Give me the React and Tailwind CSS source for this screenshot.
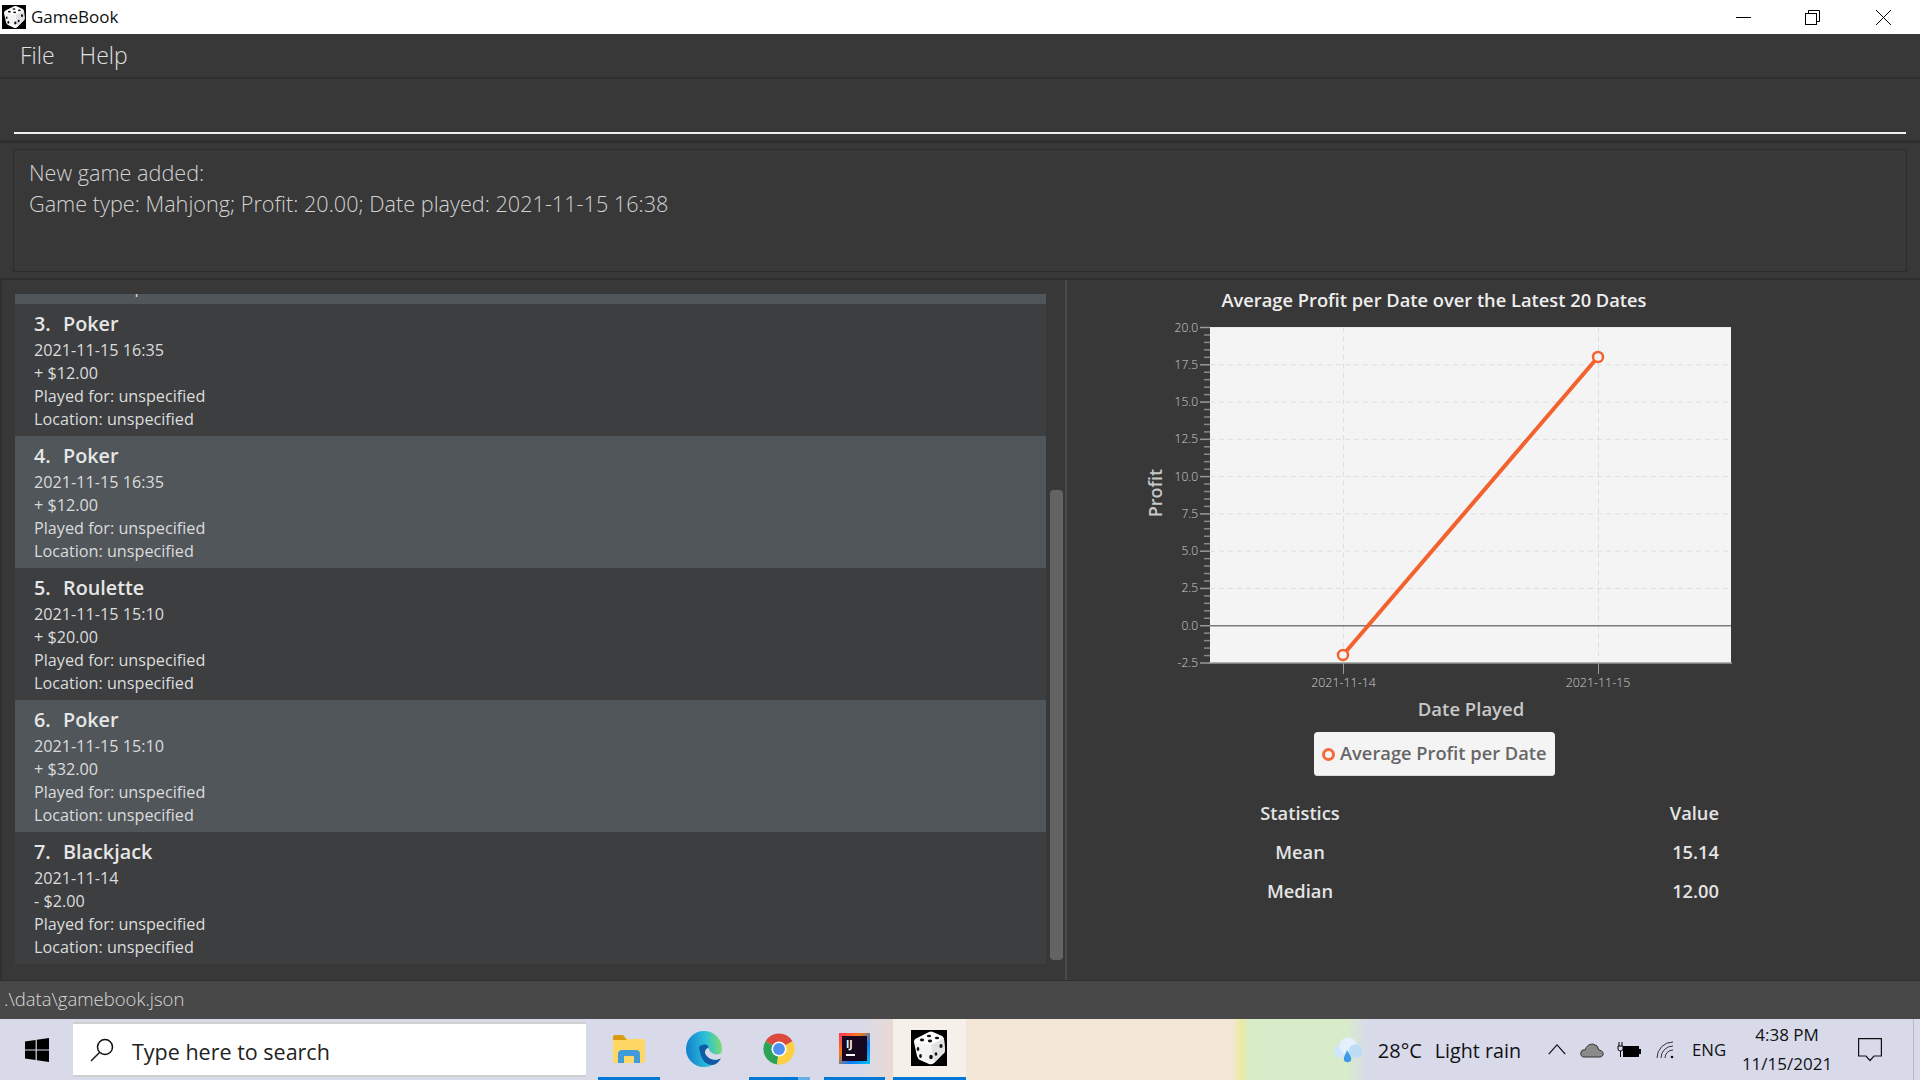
import React from "react";

const games = [
  { n: 3, t: "Poker", d: "2021-11-15 16:35", p: "+ $12.00" },
  { n: 4, t: "Poker", d: "2021-11-15 16:35", p: "+ $12.00", s: true },
  { n: 5, t: "Roulette", d: "2021-11-15 15:10", p: "+ $20.00" },
  { n: 6, t: "Poker", d: "2021-11-15 15:10", p: "+ $32.00", s: true },
  { n: 7, t: "Blackjack", d: "2021-11-14", p: "- $2.00" },
];

function Dice({ className }) {
  return (
    <svg viewBox="0 0 36 36" className={className}>
      <rect width="36" height="36" fill="#000" />
      <path d="M3 12 Q3 9 6 8 L18 2 Q20 1 22 2 L31 6 Q33 7 33 10 L34 20 Q34 23 32 24 L23 33 Q21 35 18 34 L9 30 Q7 29 6 26 Z" fill="#fff" />
      <path d="M20 15 L33 8 L34 21 L23 33 Z" fill="#e2e2e2" />
      <path d="M3.5 12 L20 15 L22 33.5 L8 28 Z" fill="#f4f4f4" />
      <g fill="#111">
        <ellipse cx="11" cy="10" rx="2.2" ry="1.4" />
        <ellipse cx="18" cy="6" rx="2.2" ry="1.3" />
        <ellipse cx="19" cy="11" rx="2.2" ry="1.4" />
        <ellipse cx="26" cy="8" rx="2.2" ry="1.3" />
        <ellipse cx="7" cy="19" rx="1.3" ry="1.9" />
        <ellipse cx="9.5" cy="26" rx="1.4" ry="2" />
        <ellipse cx="20" cy="27" rx="1.8" ry="2.2" />
        <ellipse cx="30" cy="16" rx="1.6" ry="2" />
        <ellipse cx="25" cy="24" rx="1.4" ry="1.8" />
      </g>
    </svg>
  );
}

function Chart() {
  const yVals = ["20.0", "17.5", "15.0", "12.5", "10.0", "7.5", "5.0", "2.5", "0.0", "-2.5"];
  const top = 327.5;
  const bottom = 663;
  const step = (bottom - top) / 9;
  const minor = [];
  for (let i = 0; i < 9; i++) for (let j = 1; j < 5; j++) minor.push(top + step * i + (step * j) / 5);
  return (
    <svg viewBox="1067 316 732 409" className="block w-[732px] h-[409px]">
      <rect x="1210" y={top} width="521" height={bottom - top} fill="#f4f4f4" />
      {yVals.map((v, i) =>
        i > 0 && i < 8 ? (
          <line key={v} x1="1210" x2="1731" y1={top + step * i} y2={top + step * i} stroke="#dedede" strokeWidth="1" strokeDasharray="5 4" />
        ) : null
      )}
      <line x1="1343.5" x2="1343.5" y1={top} y2={bottom} stroke="#dedede" strokeDasharray="5 4" />
      <line x1="1598.5" x2="1598.5" y1={top} y2={bottom} stroke="#dedede" strokeDasharray="5 4" />
      <line x1="1210" x2="1731" y1={top + step * 8} y2={top + step * 8} stroke="#7a7a7a" strokeWidth="1.5" />
      <line x1="1209" x2="1732" y1={bottom} y2={bottom} stroke="#9a9a9a" strokeWidth="1.5" />
      <line x1="1210" x2="1731" y1={top} y2={top} stroke="#e8e8e8" strokeWidth="1" />
      {yVals.map((v, i) => (
        <g key={v}>
          <line x1="1200" x2="1210" y1={top + step * i} y2={top + step * i} stroke="#9a9a9a" strokeWidth="1.5" />
          <text x="1198" y={top + step * i + 4} textAnchor="end" className="fill-[#cfcfcf] text-[12px] font-light">{v}</text>
        </g>
      ))}
      {minor.map((y) => (
        <line key={y} x1="1204" x2="1210" y1={y} y2={y} stroke="#8a8a8a" strokeWidth="1.5" />
      ))}
      <line x1="1343.5" x2="1343.5" y1={bottom} y2="674" stroke="#9a9a9a" />
      <line x1="1598.5" x2="1598.5" y1={bottom} y2="674" stroke="#9a9a9a" />
      <text x="1343.5" y="687" textAnchor="middle" className="fill-[#cfcfcf] text-[12.4px] font-light">2021-11-14</text>
      <text x="1598" y="687" textAnchor="middle" className="fill-[#cfcfcf] text-[12.4px] font-light">2021-11-15</text>
      <text x="1471" y="716" textAnchor="middle" className="fill-[#c8c8c8] text-[18.5px] font-semibold">Date Played</text>
      <text transform="translate(1162 493) rotate(-90)" textAnchor="middle" className="fill-[#c8c8c8] text-[18px] font-semibold">Profit</text>
      <line x1="1343" y1="655" x2="1598" y2="357" stroke="#f3622d" strokeWidth="4" />
      <circle cx="1343" cy="655" r="5" fill="#f4f4f4" stroke="#f3622d" strokeWidth="2.5" />
      <circle cx="1598" cy="357" r="5" fill="#f4f4f4" stroke="#f3622d" strokeWidth="2.5" />
    </svg>
  );
}

function Row({ g }) {
  return (
    <div className={`h-[132px] pl-[19px] pt-[6px] flex flex-col ${g.s ? "bg-[#50565a]" : "bg-[#3d3e40]"}`}>
      <div className="h-[27px] flex items-center text-[19.8px] font-semibold text-[#e6e6e6] whitespace-pre">
        <span>{g.n}.  </span>
        <span className="ml-[2px]">{g.t}</span>
      </div>
      <div className="text-[16.2px] leading-[23px] text-[#dcdcdc] mt-[2px]">
        <div>{g.d}</div>
        <div>{g.p}</div>
        <div>Played for: unspecified</div>
        <div>Location: unspecified</div>
      </div>
    </div>
  );
}

function WinControls() {
  return (
    <div className="flex items-center h-full">
      <svg viewBox="0 0 15 15" className="w-[15px] h-[15px] mr-[54px]"><line x1="0" x2="15" y1="7.5" y2="7.5" stroke="#000" /></svg>
      <svg viewBox="0 0 15 15" className="w-[15px] h-[15px] mr-[56px]" fill="none" stroke="#000">
        <rect x="0.5" y="3.5" width="11" height="11" />
        <path d="M3.5 3.5 V0.5 H14.5 V11.5 H11.5" />
      </svg>
      <svg viewBox="0 0 15 15" className="w-[15px] h-[15px] mr-[29px]" stroke="#000"><path d="M0 0 L15 15 M15 0 L0 15" /></svg>
    </div>
  );
}

function Taskbar() {
  return (
    <div className="h-[61px] flex items-stretch relative bg-[linear-gradient(90deg,#d8daea_0,#d8daea_860px,#e9d9d2_893px,#f3e6d6_966px,#f3e6d6_1232px,#ece8a2_1241px,#d8ecca_1250px,#d8ecca_1345px,#d8daea_1368px,#d8daea_100%)] text-[#111]">
      <div className="w-[73px] flex items-center justify-center">
        <svg viewBox="0 0 24 24" className="w-[24px] h-[24px]" fill="#000">
          <path d="M0 3.4 L10.6 1.9 V11.4 H0 Z M11.8 1.7 L24 0 V11.4 H11.8 Z M0 12.6 H10.6 V22.1 L0 20.6 Z M11.8 12.6 H24 V24 L11.8 22.3 Z" />
        </svg>
      </div>
      <div className="w-[513px] my-[3px] bg-white border-y-2 border-[#cfcfcf] flex items-center pl-[17px]">
        <svg viewBox="0 0 24 24" className="w-[24px] h-[24px] mr-[18px]" fill="none" stroke="#111" strokeWidth="1.5">
          <circle cx="15" cy="9" r="7.5" />
          <line x1="9.5" y1="14.5" x2="1" y2="23" />
        </svg>
        <span className="text-[21.5px] text-[#222] mt-[5px]">Type here to search</span>
      </div>
      <div className="w-[12px]" />
      <div className="w-[62px] flex flex-col">
        <div className="flex-1 flex items-center justify-center pt-[2px]">
          <svg viewBox="0 0 32 28" className="w-[32px] h-[28px]">
            <path d="M0 2 Q0 0 2 0 H10 L14 4 H30 Q32 4 32 6 V26 Q32 28 30 28 H2 Q0 28 0 26 Z" fill="#ffd765" />
            <path d="M0 2 Q0 0 2 0 H10 L14 5 H0 Z" fill="#d89c12" />
            <path d="M5 28 V19 Q5 15 9 15 H23 Q27 15 27 19 V28 H21 V21 H11 V28 Z" fill="#3f9bd9" />
          </svg>
        </div>
        <div className="h-[3px] bg-[#0078d7]" />
      </div>
      <div className="w-[89px] flex flex-col">
        <div className="flex-1 flex items-center justify-center pt-[2px] pr-[1px]">
          <svg viewBox="0 0 36 36" className="w-[36px] h-[36px]">
            <defs>
              <linearGradient id="edgeA" x1="0" y1="0.4" x2="1" y2="0.3">
                <stop offset="0" stopColor="#1380cf" />
                <stop offset="0.55" stopColor="#2bc0d8" />
                <stop offset="1" stopColor="#7fdc6e" />
              </linearGradient>
            </defs>
            <circle cx="18" cy="18" r="18" fill="url(#edgeA)" />
            <path d="M13 16 C14 24 17 34 26 34 C30 34 33 31 35 27 C30 30 25 29 22 26 C18 23 19 19 22 17 C24 15 18 11 13 16 Z" fill="#0f5ba5" />
            <path d="M35.5 21 C34 24 29 24 26 22 C24 21 23 18 22 17 C18 19 18 23 22 26 C25 29 31 30 35 27 Z" fill="#d8daea" />
          </svg>
        </div>
        <div className="h-[3px]" />
      </div>
      <div className="w-[61px] flex flex-col">
        <div className="flex-1 flex items-center justify-center pt-[2px] pr-[2px]">
          <svg viewBox="0 0 36 36" className="w-[34px] h-[34px]">
            <path d="M18 18 L3.7 9.75 A16.5 16.5 0 0 1 32.3 9.75 Z" fill="#db4a3d" />
            <path d="M18 18 L3.7 9.75 A16.5 16.5 0 0 0 16 34.4 Z" fill="#2ba457" />
            <path d="M18 18 L32.3 9.75 A16.5 16.5 0 0 1 16 34.4 Z" fill="#fdd043" />
            <circle cx="18" cy="18" r="8" fill="#fff" />
            <circle cx="18" cy="18" r="6.3" fill="#4f8ff0" />
          </svg>
        </div>
        <div className="h-[3px] flex"><div className="w-[49px] bg-[#0078d7]" /><div className="flex-1 bg-[#66aee8]" /></div>
      </div>
      <div className="w-[14px]" />
      <div className="w-[61px] flex flex-col">
        <div className="flex-1 flex items-center justify-center pt-[1px]">
          <div className="w-[31px] h-[31px] p-[3px] bg-[linear-gradient(135deg,#fe315d,#f97a12_35%,#087cfa_65%,#07c3f2)]">
            <div className="w-full h-full bg-[#17071f] pl-[4px] pt-[2px] flex flex-col">
              <span className="text-[10px] leading-[12px] font-bold text-white">IJ</span>
              <div className="w-[9px] h-[2px] bg-white mt-[4px]" />
            </div>
          </div>
        </div>
        <div className="h-[3px] bg-[#0078d7]" />
      </div>
      <div className="w-[8px]" />
      <div className="w-[73px] flex flex-col bg-[#f5f1ea]">
        <div className="flex-1 flex items-center justify-center pr-[1px]"><Dice className="w-[36px] h-[36px]" /></div>
        <div className="h-[3px] bg-[#0078d7]" />
      </div>
      <div className="flex-1" />
      <div className="flex items-center text-[#111]">
        <svg viewBox="0 0 30 24" className="w-[32px] h-[26px] mr-[15px]">
          <circle cx="9" cy="13" r="6.5" fill="#cfe6fb" />
          <circle cx="16" cy="8" r="8" fill="#e4f1fd" />
          <circle cx="23" cy="13" r="6.5" fill="#bcdcf8" />
          <path d="M15 12 C17 16 19 18 19 20 A3.5 3.5 0 0 1 12 20 C12 18 14 16 15 12 Z" fill="#3d9be9" />
        </svg>
        <span className="text-[20px] mr-[13px] mt-[3px]">28°C</span>
        <span className="text-[19.7px] mr-[26px] mt-[3px]">Light rain</span>
        <svg viewBox="0 0 20 12" className="w-[20px] h-[11px] mr-[13px]" fill="none" stroke="#111" strokeWidth="1.3"><path d="M1 11 L10 1 L19 11" /></svg>
        <svg viewBox="0 0 24 16" className="w-[24px] h-[16px] mr-[13px]">
          <path d="M4 15 Q0 15 1 10 Q2 7 5 8 Q7 2 13 2 Q18 3 19 8 Q24 9 23 13 Q22 15 20 15 Z" fill="#8a8a8a" stroke="#333" />
        </svg>
        <svg viewBox="0 0 24 16" className="w-[24px] h-[16px] mr-[15px]">
          <rect x="6" y="4" width="16" height="11" fill="#000" />
          <rect x="22" y="7" width="2" height="5" fill="#000" />
          <path d="M2 0 V4 M5 0 V4 M1 4 H6 V7 Q6 9 3.5 9 Q1 9 1 7 Z M3.5 9 V15" fill="#d8daea" stroke="#000" />
        </svg>
        <svg viewBox="0 0 20 18" className="w-[20px] h-[18px] mr-[16px]" fill="none" stroke="#333">
          <path d="M1 17 A16 16 0 0 1 17 1" />
          <path d="M5 17 A12 12 0 0 1 17 5" />
          <path d="M9 17 A8 8 0 0 1 17 9" />
          <circle cx="16" cy="16" r="1.3" fill="#111" stroke="none" />
        </svg>
        <span className="text-[16.8px] w-[35px] mr-[13px]">ENG</span>
        <div className="w-[94px] flex flex-col items-center text-[17px] leading-[29px] -mt-[2px]">
          <span>4:38 PM</span>
          <span>11/15/2021</span>
        </div>
        <svg viewBox="0 0 24 24" className="w-[24px] h-[24px] ml-[24px] mr-[38px]" fill="none" stroke="#111" strokeWidth="1.2">
          <path d="M0.6 0.6 H23.4 V18 H16 L12 22.5 L8 18 H0.6 Z" />
        </svg>
      </div>
      <div className="absolute right-[6px] top-0 bottom-0 w-[1px] bg-[#b9bacb]" />
    </div>
  );
}

export default function App() {
  return (
    <div className="w-[1920px] h-[1080px] overflow-hidden flex flex-col bg-[#383838] [font-family:'Open_Sans',sans-serif]">
      <div className="h-[34px] bg-white flex items-center justify-between shrink-0">
        <div className="flex items-center pl-[2px]">
          <Dice className="w-[24px] h-[24px]" />
          <span className="ml-[5px] text-[17px] text-[#111]">GameBook</span>
        </div>
        <WinControls />
      </div>

      <div className="h-[43px] flex items-center gap-[25px] pl-[20px] text-[23px] font-light text-[#e2e2e2] shrink-0">
        <span>File</span>
        <span>Help</span>
      </div>

      <div className="h-[63px] border-t-2 border-[#2f2f2f] shrink-0 flex flex-col justify-end px-[14px] pb-[6px]">
        <div className="h-[2px] bg-[#f2f2f2]" />
      </div>

      <div className="h-[140px] border-t-[3px] border-b-2 border-[#2f2f2f] shrink-0 pt-[6px] pb-[6px] px-[13px]">
        <div className="h-full border border-[#2c2c2c] pl-[15px] pt-[7px] text-[21.65px] leading-[31px] font-light text-[#d2d2d2]">
          <div>New game added:</div>
          <div>Game type: Mahjong; Profit: 20.00; Date played: 2021-11-15 16:38</div>
        </div>
      </div>

      <div className="flex-1 flex min-h-0">
        <div className="w-[1067px] shrink-0 border-r-2 border-[#4a4a4a] border-l-2 border-l-[#2f2f2f] flex pl-[13px] pt-[14px]">
          <div className="w-[1031px] flex flex-col">
            <div className="h-[10px] overflow-hidden bg-[#50565a] pl-[19px] flex flex-col justify-end">
              <div className="text-[16.2px] leading-[23px] text-[#dcdcdc] shrink-0 -translate-y-[5px]">Location: unspecified</div>
            </div>
            {games.map((g) => <Row key={g.n} g={g} />)}
          </div>
          <div className="ml-[4px] w-[13px] mt-[196px] h-[470px] rounded-[4px] bg-[#636363]" />
        </div>
        <div className="w-[732px] flex flex-col">
          <div className="h-[36px] pt-[4px] pl-[2px] flex items-center justify-center text-[18.3px] font-semibold text-[#eeeeee]">
            Average Profit per Date over the Latest 20 Dates
          </div>
          <Chart />
          <div className="ml-[247px] mt-[7px] h-[44px] w-[241px] rounded-[4px] bg-[#f4f4f4] flex items-center pl-[8px] shadow-[inset_0_-1px_0_#dcdcdc]">
            <span className="w-[13px] h-[13px] rounded-full border-[3px] border-[#f5693a] mr-[5px]" />
            <span className="text-[18.3px] font-semibold text-[#666666] whitespace-nowrap -mt-[2px]">Average Profit per Date</span>
          </div>
          <div className="mt-[17px] grid grid-cols-[120px_1fr] pl-[173px] pr-[80px] text-[18.3px] font-semibold text-[#e4e4e4] auto-rows-[39px] items-center">
            <div className="text-center">Statistics</div><div className="text-right">Value</div>
            <div className="text-center">Mean</div><div className="text-right">15.14</div>
            <div className="text-center">Median</div><div className="text-right">12.00</div>
          </div>
        </div>
      </div>

      <div className="h-[39px] shrink-0 bg-[#484848] border-t border-[#2f2f2f] flex items-center pl-[4px] pb-[2px] text-[18.5px] font-light text-[#d8d8d8]">
        .\data\gamebook.json
      </div>
      <div className="h-[1px] bg-white shrink-0 -mb-[1px] relative" />
      <Taskbar />
    </div>
  );
}
